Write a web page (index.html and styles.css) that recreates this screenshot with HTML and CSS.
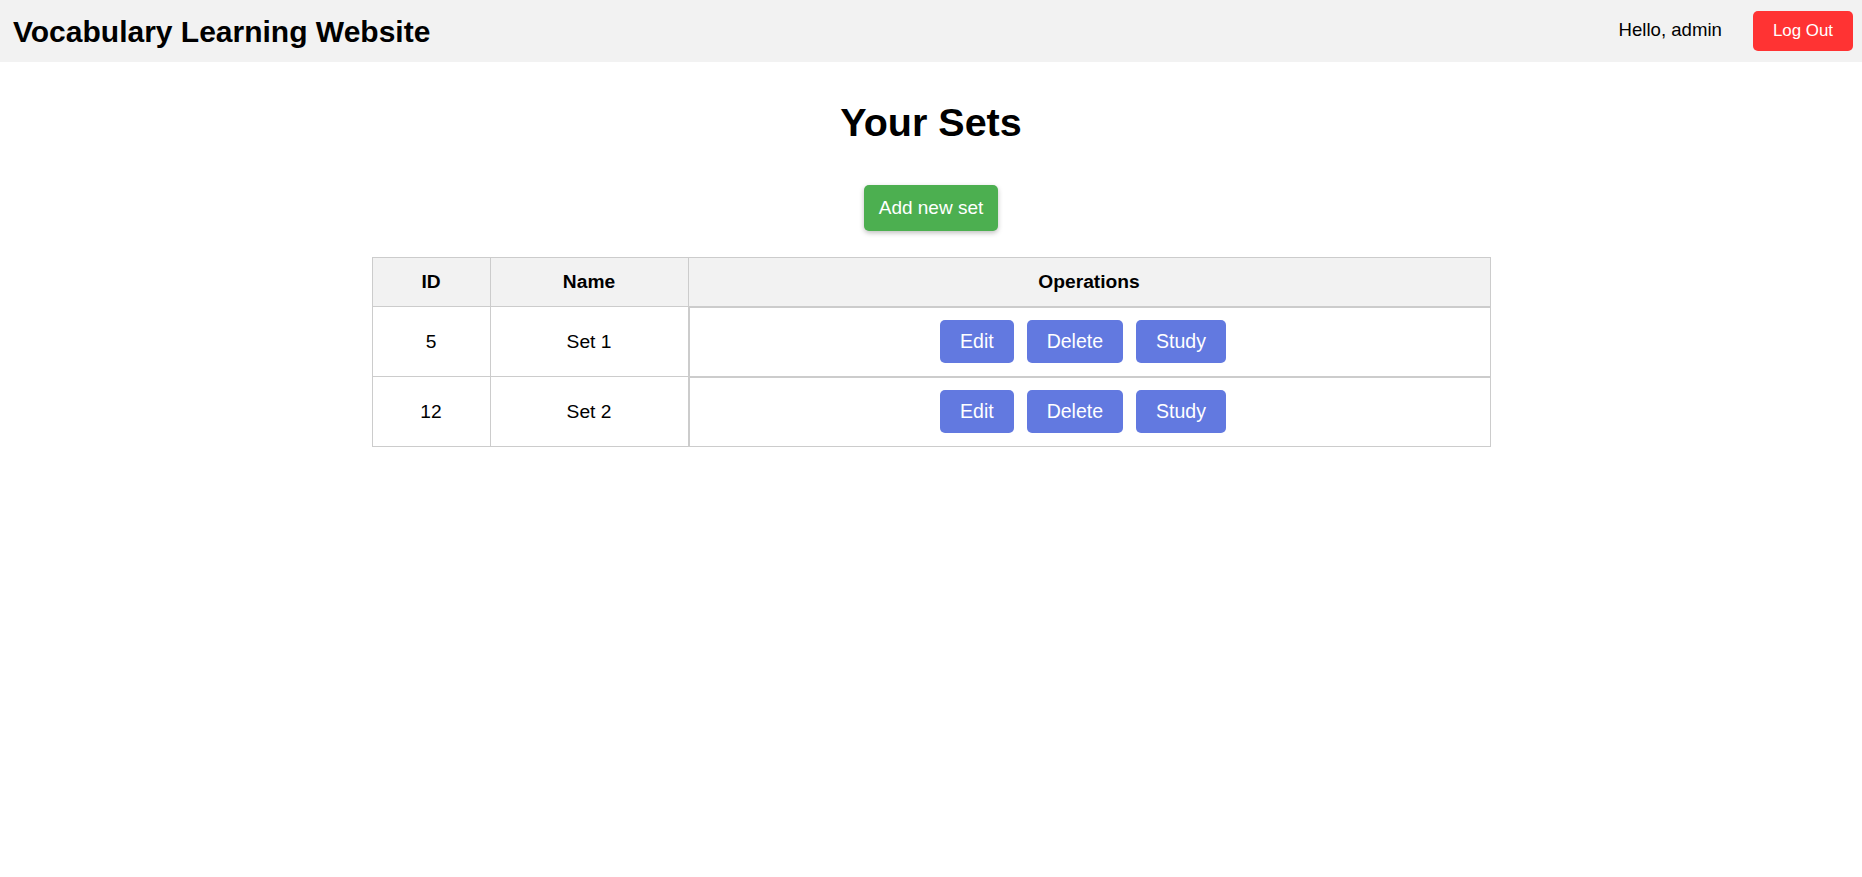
FILE: index.html
```html
<!DOCTYPE html>
<html lang="en">
<head>
<meta charset="utf-8">
<title>Your Sets</title>
<link rel="stylesheet" href="styles.css">
</head>
<body>
<header class="topbar">
  <div class="brand">Vocabulary Learning Website</div>
  <div class="user">
    <span class="hello">Hello, admin</span>
    <button class="btn-logout">Log Out</button>
  </div>
</header>
<main class="content">
  <h2 class="page-title">Your Sets</h2>
  <div class="add-wrap"><button class="btn-add">Add new set</button></div>
  <table class="sets">
    <colgroup>
      <col class="col-id">
      <col class="col-name">
      <col class="col-ops">
    </colgroup>
    <thead>
      <tr><th>ID</th><th>Name</th><th>Operations</th></tr>
    </thead>
    <tbody>
      <tr>
        <td>5</td>
        <td>Set 1</td>
        <td class="ops-cell"><div class="ops"><button class="btn-op">Edit</button><button class="btn-op">Delete</button><button class="btn-op">Study</button></div></td>
      </tr>
      <tr>
        <td>12</td>
        <td>Set 2</td>
        <td class="ops-cell"><div class="ops"><button class="btn-op">Edit</button><button class="btn-op">Delete</button><button class="btn-op">Study</button></div></td>
      </tr>
    </tbody>
  </table>
</main>
</body>
</html>
```
FILE: styles.css
```css
html, body {
  margin: 0;
  padding: 0;
  background: #ffffff;
  font-family: "Liberation Sans", Arial, Helvetica, sans-serif;
  color: #000;
}

.topbar {
  height: 62px;
  box-sizing: border-box;
  background: #f2f2f2;
  display: flex;
  align-items: center;
  justify-content: space-between;
  padding: 0 9px 0 13px;
}

.brand {
  font-size: 30px;
  font-weight: bold;
  line-height: 34px;
  margin-top: 1px;
  white-space: nowrap;
}

.user {
  display: flex;
  align-items: center;
  gap: 31px;
}

.hello {
  font-size: 18.6px;
  line-height: 22px;
  margin-top: -2px;
  white-space: nowrap;
}

.btn-logout {
  font-family: inherit;
  font-size: 16.9px;
  line-height: 20px;
  padding: 10px 20px;
  height: 40px;
  box-sizing: border-box;
  border: none;
  border-radius: 5px;
  background: #ff3333;
  color: #fff;
  white-space: nowrap;
}

.content {
  text-align: center;
}

.page-title {
  font-size: 39.5px;
  font-weight: bold;
  line-height: 45px;
  margin: 38px 0 40px;
}

.add-wrap {
  margin-bottom: 26px;
}

.btn-add {
  font-family: inherit;
  font-size: 19px;
  line-height: 22px;
  padding: 12px 15px;
  border: none;
  border-radius: 5px;
  background: #4caf50;
  color: #fff;
  box-shadow: 0 2px 5px rgba(0, 0, 0, 0.25);
}

.sets {
  width: 1119px;
  margin: 0 auto;
  border-collapse: collapse;
  table-layout: fixed;
  font-size: 19.2px;
}

.col-id { width: 118px; }
.col-name { width: 198px; }

.sets th,
.sets td {
  border: 1px solid #cccccc;
  text-align: center;
  vertical-align: middle;
  line-height: 22px;
}

.sets th {
  background: #f2f2f2;
  font-weight: bold;
  padding: 13px 8px;
}

.sets td {
  padding: 0 8px;
}

.sets td.ops-cell {
  padding: 0;
}

.ops {
  display: flex;
  justify-content: center;
  border-top: 1px solid #cccccc;
  border-left: 1px solid #cccccc;
  padding: 12px 0 13px;
}

.btn-op {
  font-family: inherit;
  font-size: 19.5px;
  line-height: 23px;
  padding: 10px 20px;
  margin-right: 13px;
  border: none;
  border-radius: 5px;
  background: #6279e0;
  color: #fff;
}
```
